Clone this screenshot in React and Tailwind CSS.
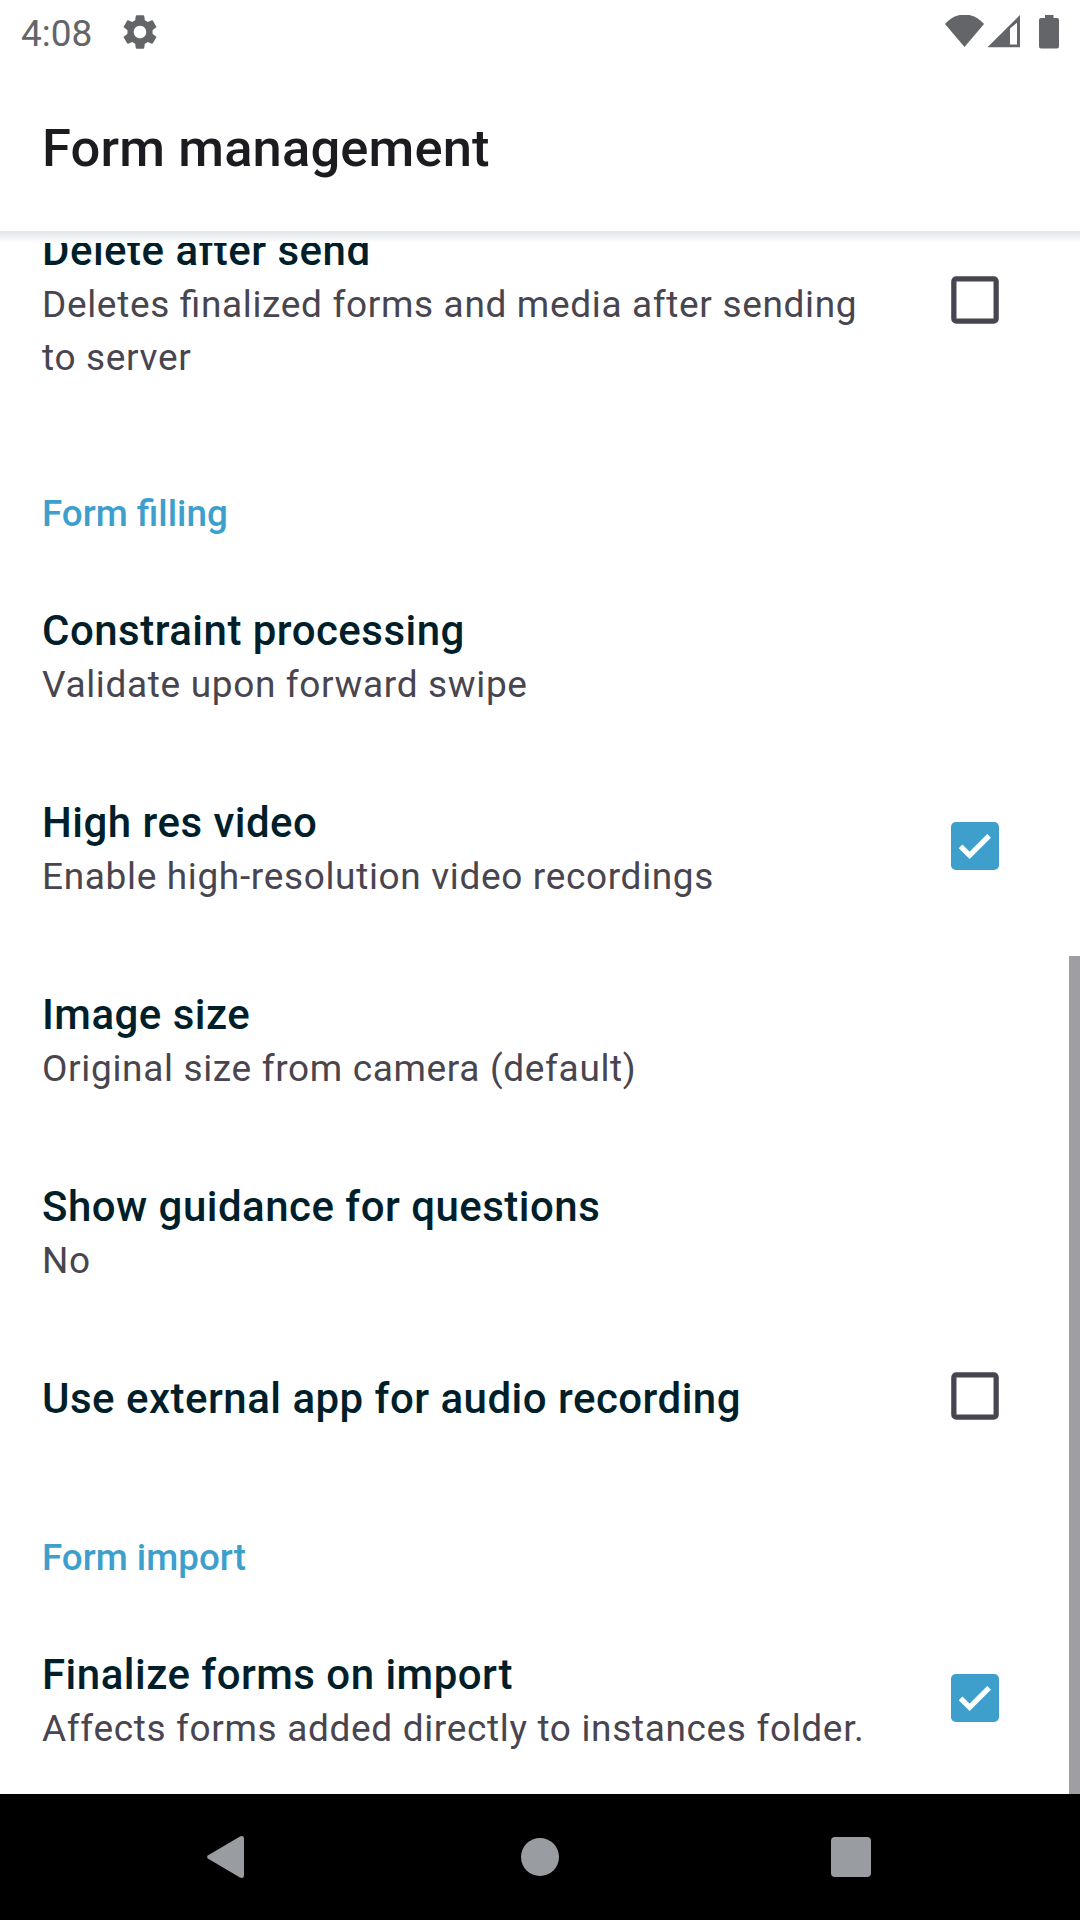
const Check = ({ on }) => (
  <svg className="mr-[69px] size-[72px] shrink-0 self-center" viewBox="0 0 24 24">
    {on ? (
      <>
        <rect x="4" y="4" width="16" height="16" rx="1.6" fill="#3e9fcc" />
        <path d="M7.2 12.1 10.2 15.1 16.7 8.6" fill="none" stroke="#fff" strokeWidth="1.75" />
      </>
    ) : (
      <rect x="4.95" y="4.95" width="14.1" height="14.1" rx="0.8" fill="none" stroke="#45464f" strokeWidth="1.75" />
    )}
  </svg>
);

const Row = ({ title, summary, box, height = "h-[192px]" }) => (
  <div className={`flex shrink-0 items-start justify-between pl-[42px] ${height}`}>
    <div className="pt-[45px]">
      <div className="text-[42px] leading-[55px] font-medium tracking-[0.48px] whitespace-nowrap text-[#001f2a]">{title}</div>
      {summary && (
        <div className="text-[37px] leading-[53px] tracking-[0.656px] whitespace-pre text-[#49454f] [font-feature-settings:'liga'_1]">{summary}</div>
      )}
    </div>
    {box !== undefined && <Check on={box} />}
  </div>
);

const Category = ({ children }) => (
  <div className="h-[136px] shrink-0 pt-[70px] pl-[42px] text-[36.75px] leading-[43px] font-medium text-[#3e9fcc]">{children}</div>
);

const StatusBar = () => (
  <div className="flex h-[63px] shrink-0 items-center pr-[21px] pl-[21px] text-[#636569]">
    <span className="pt-[3px] text-[37px] leading-[43px]">4:08</span>
    <svg className="ml-[27px] size-[42px]" viewBox="0 0 24 24" fill="currentColor">
      <path d="M19.14 12.94c.04-.3.06-.61.06-.94 0-.32-.02-.64-.07-.94l2.03-1.58c.18-.14.23-.41.12-.61l-1.92-3.32c-.12-.22-.37-.29-.59-.22l-2.39.96c-.5-.38-1.03-.7-1.62-.94l-.36-2.54c-.04-.24-.24-.41-.48-.41h-3.84c-.24 0-.43.17-.47.41l-.36 2.54c-.59.24-1.13.57-1.62.94l-2.39-.96c-.22-.08-.47 0-.59.22L2.74 8.87c-.12.21-.08.47.12.61l2.03 1.58c-.05.3-.09.63-.09.94s.02.64.07.94l-2.03 1.58c-.18.14-.23.41-.12.61l1.92 3.32c.12.22.37.29.59.22l2.39-.96c.5.38 1.03.7 1.62.94l.36 2.54c.05.24.24.41.48.41h3.84c.24 0 .44-.17.47-.41l.36-2.54c.59-.24 1.13-.56 1.62-.94l2.39.96c.22.08.47 0 .59-.22l1.92-3.32c.12-.22.07-.47-.12-.61l-2.01-1.58zM12 15.6c-1.98 0-3.6-1.62-3.6-3.6s1.62-3.6 3.6-3.6 3.6 1.62 3.6 3.6-1.62 3.6-3.6 3.6z" />
    </svg>
    <svg className="ml-auto h-[34px] w-[114px]" viewBox="0 0 114 34" fill="currentColor">
      <path d="M0 9Q8.500-.5 19.500-.5T39 9L19.500 32Z" />
      <path fillRule="evenodd" d="M42.500 32.200 75 0V32.200ZM65 13.500V29.500H72V7.800Z" />
      <path d="M96 3h4V0h8.500v3h3.500q2 0 2 2V31.500q0 2-2 2H96q-2 0-2-2V5q0-2 2-2Z" />
    </svg>
  </div>
);

const NavBar = () => (
  <div className="flex h-[126px] shrink-0 items-center bg-black pl-[207px] text-[#999ca0]">
    <svg className="h-[42px] w-[37px]" viewBox="0 0 37 42" fill="currentColor">
      <path d="M1.200 19.200 33 .5Q37-1 37 3V39Q37 43 33 41.500L1.200 22.800Q-1 21 1.200 19.200Z" />
    </svg>
    <div className="ml-[277px] size-[38px] rounded-full bg-current" />
    <div className="ml-[272px] size-[40px] rounded-[4px] bg-current" />
  </div>
);

export default function App() {
  return (
    <div className="flex h-[1920px] w-[1080px] flex-col overflow-hidden bg-white font-['Roboto',sans-serif]">
      <StatusBar />
      <h1 className="flex h-[168px] shrink-0 items-center pt-[3px] pl-[42px] text-[52.5px] font-medium tracking-[0.15px] text-[#1c1b1f]">
        Form management
      </h1>
      <div className="h-[12px] shrink-0 bg-linear-to-b from-[#e4e5e7] via-[#f0f1f3] to-white" />
      <div className="relative h-[1551px] shrink-0 overflow-hidden">
        <div className="-mt-[65px] flex flex-col">
          <Row title="Delete after send" summary={"Deletes finalized forms and media after sending\nto server"} box={false} height="h-[244px]" />
          <Category>Form filling</Category>
          <Row title="Constraint processing" summary="Validate upon forward swipe" />
          <Row title="High res video" summary="Enable high-resolution video recordings" box={true} />
          <Row title="Image size" summary="Original size from camera (default)" />
          <Row title="Show guidance for questions" summary="No" />
          <Row title="Use external app for audio recording" box={false} height="h-[140px]" />
          <Category>Form import</Category>
          <Row title="Finalize forms on import" summary="Affects forms added directly to instances folder." box={true} />
        </div>
        <div className="absolute right-0 bottom-0 h-[838px] w-[11px] bg-[#9e9ea3]" />
      </div>
      <NavBar />
    </div>
  );
}
